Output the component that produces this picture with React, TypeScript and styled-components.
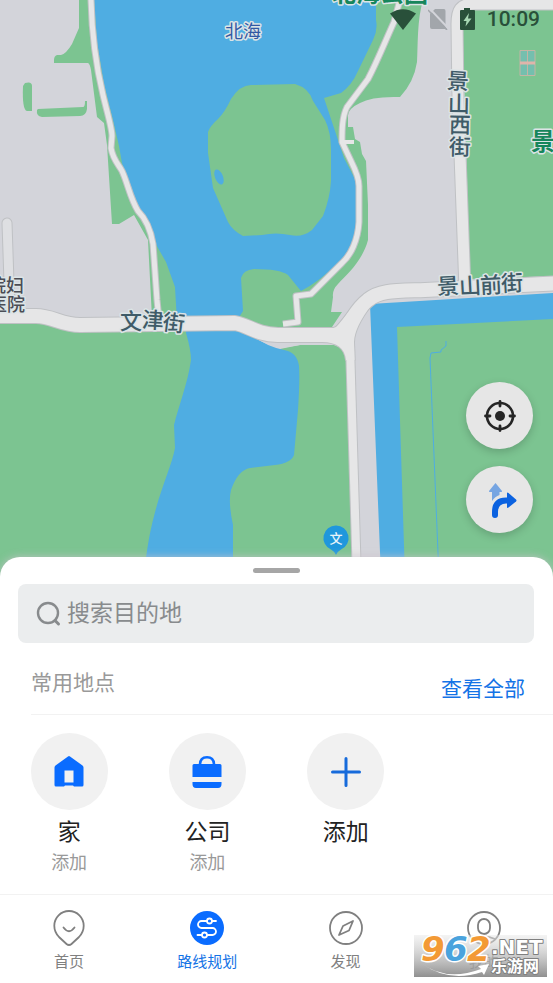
import React from "react";
import styled, { createGlobalStyle } from "styled-components";

const color = {
  land: "#d3d4da",
  green: "#7cc491",
  water: "#4fade2",
  road: "#e6e6e7",
  roadEdge: "#bfc1c4",
  blue: "#0a6cff",
  link: "#1473e6",
  muted: "#999999",
};

const GlobalStyle = createGlobalStyle`
  * { box-sizing: border-box; }
  body {
    margin: 0;
    background: #ffffff;
    font-family: Roboto, "Noto Sans CJK SC", sans-serif;
    color: #222222;
  }
  button, input { font: inherit; color: inherit; }
  button { border: 0; padding: 0; background: none; cursor: pointer; }
`;

const Page = styled.div`
  position: relative;
  display: flex;
  flex-direction: column;
  min-height: 100vh;
  overflow: hidden;
`;

const MapArea = styled.section`
  position: relative;
  flex: 1;
  min-height: 400px;
  display: flex;
  flex-direction: column;
  justify-content: space-between;
  background: ${color.land};
`;

const MapCanvas = styled.svg`
  position: absolute;
  inset: 0;
  width: 100%;
  height: 100%;
  font-family: "Noto Sans CJK SC", sans-serif;
`;

const StatusBar = styled.header`
  position: relative;
  display: flex;
  align-items: center;
  justify-content: flex-end;
  gap: 12px;
  height: 38px;
  padding-right: 13px;
  color: #29503a;
`;

const Clock = styled.time`
  font: 500 21px/24px Roboto, sans-serif;
`;

const MapControls = styled.div`
  position: relative;
  display: flex;
  flex-direction: column;
  align-items: flex-end;
  gap: 17px;
  padding: 0 20px 44px 0;
`;

const RoundButton = styled.button`
  display: grid;
  place-items: center;
  width: 67px;
  height: 67px;
  border-radius: 50%;
  background: #e6e6e6;
  box-shadow: 0 3px 8px rgba(0, 0, 0, 0.18);
`;

const Sheet = styled.main`
  position: relative;
  margin-top: -20px;
  border-radius: 20px 20px 0 0;
  background: #ffffff;
  box-shadow: 0 0 9px rgba(205, 195, 205, 0.8);
`;

const Handle = styled.div`
  width: 47px;
  height: 5px;
  margin: 0 auto 11px;
  border-radius: 3px;
  background: #a6a6a6;
`;

const SheetTop = styled.div`
  padding: 11px 19px 0 18px;
`;

const SearchBox = styled.label`
  display: flex;
  align-items: center;
  gap: 5px;
  height: 59px;
  padding: 0 18px;
  border-radius: 8px;
  background: #ebedee;
  color: #888b8d;
`;

const SearchInput = styled.input`
  flex: 1;
  min-width: 0;
  padding: 0;
  border: 0;
  outline: 0;
  background: none;
  font-size: 23px;
  line-height: 34px;
  &::placeholder { color: #888b8d; opacity: 1; }
`;

const SectionHeader = styled.div`
  display: flex;
  align-items: flex-end;
  justify-content: space-between;
  height: 72px;
  margin-left: 31px;
  padding-right: 28px;
  border-bottom: 1px solid #f2f2f2;
`;

const SectionTitle = styled.h2`
  margin: 0 0 16px;
  font-size: 21px;
  line-height: 30px;
  font-weight: 400;
  color: ${color.muted};
`;

const ViewAll = styled.a`
  margin-bottom: 10px;
  font-size: 21px;
  line-height: 30px;
  color: ${color.link};
  text-decoration: none;
`;

const Places = styled.div`
  display: grid;
  grid-template-columns: repeat(4, 1fr);
  padding: 18px 0 19px;
`;

const Place = styled.button`
  display: flex;
  flex-direction: column;
  align-items: center;
`;

const PlaceIcon = styled.span`
  display: grid;
  place-items: center;
  width: 77px;
  height: 77px;
  margin-bottom: 8px;
  border-radius: 50%;
  background: #f1f1f1;
`;

const PlaceName = styled.span`
  font-size: 23px;
  line-height: 30px;
`;

const PlaceHint = styled.span`
  margin-top: 3px;
  font-size: 18px;
  line-height: 24px;
  color: ${color.muted};
`;

const TabBar = styled.nav`
  display: grid;
  grid-template-columns: repeat(4, 1fr);
  padding: 15px 0 11px;
  border-top: 1px solid #f2f2f2;
`;

const Tab = styled.button<{ $active?: boolean }>`
  display: flex;
  flex-direction: column;
  align-items: center;
  gap: 6px;
  font-size: 15px;
  line-height: 20px;
  color: ${(p) => (p.$active ? color.link : "#808080")};
`;

const Watermark = styled.svg`
  position: absolute;
  right: 6px;
  bottom: 6px;
  width: 133px;
  height: 42px;
  overflow: visible;
  pointer-events: none;
`;

const MapLabel = styled.text<{ $tone?: string; $size?: number; $weight?: number }>`
  fill: ${(p) => p.$tone ?? "#3f5b68"};
  font-size: ${(p) => p.$size ?? 22}px;
  font-weight: ${(p) => p.$weight ?? 500};
  stroke: #dce4e6;
  stroke-width: 3px;
  stroke-linejoin: round;
  paint-order: stroke;
  text-anchor: middle;
`;

const roads = {
  lake: "M91 0C92 40 97 70 103 95C107 112 112 128 112 136L111 148C113 160 119 165 122 171C128 184 130 198 138 211C147 220 151 232 153 244L157 300L159 320",
  park: "M401 -4L394 22C384 44 377 62 368 79L347 107C342 117 342 130 342 142L351 161C356 171 359 178 359 186V222C358 240 351 255 342 263L311 294L296 296L298 322L283 324",
  parkStub: "M342 142H354",
  alley: "M7 223L10 312",
  main: "M-8 316H36C52 316 62 325 80 325L235 323C250 326 255 334 278 335L335 335C350 330 352 312 368 300C380 290 396 291 425 290L561 283",
  south: "M350 345L357 580",
  junction: "M322 342Q344 342 346 360H354.500L354 342Q354 328 372 304L352 308L334 330Z",
  west: "M561 4H474C460 4 457 10 457 24L458 100L465 290",
};

const streetChars = [
  ["景", 458, 89, 3], ["山", 459, 112, 1], ["西", 460, 133, 1], ["街", 460, 155, 1],
  ["文", 131, 329, 0], ["津", 153, 328, 3], ["街", 174, 331, 7],
  ["景", 448, 294, -3], ["山", 470, 294, -3], ["前", 491, 293, -3], ["街", 512, 291, -3],
] as const;

function MapDrawing() {
  return (
    <MapCanvas viewBox="0 0 553 577" preserveAspectRatio="xMidYMax slice" role="img" aria-label="地图">
      <g fill={color.green}>
        <path d="M79 0V28L72 44Q66 54 61 55H57Q54 56 54 60V63H88Q90 64 91 70L97 117L104 123L107 145L112 224H119L134 215L148 240L152 318H200V0Z" />
        <path d="M370 0H423C417 20 418 45 417 62Q414 82 400 97Q372 96 360 103Q347 109 348 117V127H353L355 139L360 142L362 154L366 161L368 205V240C362 262 347 274 338 284Q332 290 333 297L331 312H342L330 330H236V180H300V90Z" />
        <path d="M25 83Q32 81 32 86V111H27Q22 110 23 86Z" />
        <path d="M38 109L83 107Q85 107 85 101H87V109Q86 116 80 116L42 117Q36 116 37 110Z" />
        <path d="M0 322H60L90 331H200V577H0Z" />
        <path d="M225 577V440H275V350L300 345H334Q345 348 346 360L354 577Z" />
        <path d="M462 9H553V276L470 279Z" />
        <path d="M395 325L553 317V577H403Z" />
      </g>
      <g fill={color.water}>
        <path d="M94 0L97 42L104 84L113 120L119 146L122 163L133 199L145 223L158 248L166 262L175 287L177 322H236L243 311L241 278Q243 270 254 269Q280 269 288 275Q296 285 301 291Q320 281 338 263Q356 246 357 228V183L344 158L324 98L341 93Q352 85 358 71L373 40Q378 30 376 20V0Z" />
        <path d="M186 325V333Q191 350 191 360C188 382 179 405 174 425L175 448C170 475 150 505 144 577H233V525Q228 502 231 490Q238 470 250 468L275 465Q291 463 294 455L298 410Q300 380 299 366Q297 352 284 350Q258 345 244 325Z" />
        <path d="M370 304L553 293V319L397 327L405 577H381Z" />
      </g>
      <path fill={color.green} d="M251 85L295 84Q309 88 313 101L325 120Q331 132 331 150V181Q330 198 323 216L312 230Q302 238 290 235Q276 232 262 235L243 236Q232 230 228 222L213 188L208 153V132Q210 126 218 119Q225 112 231 99Q240 85 251 85Z" />
      <ellipse cx="219" cy="177" rx="4" ry="8" fill={color.water} transform="rotate(-22 219 177)" />
      <path fill="#d3d4da" d="M246 332Q262 344 281 348L300 345H335V335H250Z" />
      <path fill="none" stroke={color.water} strokeWidth="1" d="M446 341V346L441 350V352L431 353L430 358L439 577" />

      <g fill="none" strokeLinejoin="round">
        <g stroke={color.roadEdge}>
          <path d={roads.lake} strokeWidth="7" />
          <path d={roads.park} strokeWidth="7" />
          <path d={roads.alley} strokeWidth="11" strokeLinecap="round" />
          <path d={roads.west} strokeWidth="13" />
          <path d={roads.south} strokeWidth="10" />
          <path d={roads.main} strokeWidth="16" />
          <path d={roads.junction} strokeWidth="2" />
        </g>
        <g stroke={color.road}>
          <path d={roads.lake} strokeWidth="5" />
          <path d={roads.park} strokeWidth="5" />
          <path d={roads.parkStub} strokeWidth="4" />
          <path d={roads.alley} stroke="#dedfe2" strokeWidth="9" strokeLinecap="round" />
          <path d={roads.west} strokeWidth="11" />
          <path d={roads.south} strokeWidth="8" />
          <path d={roads.main} strokeWidth="14" />
        </g>
        <path d={roads.junction} fill={color.road} />
      </g>

      <g fill="#74bfae" stroke="#c3b5a4" strokeWidth="1">
        <path d="M520 50.500H535V75.500H520ZM527.500 50V76" />
        <path d="M520 63H535" stroke="#e0b4aa" strokeWidth="3" />
      </g>

      <MapLabel x="243" y="38" $size={18} $weight={400} $tone="#3259a4">北海</MapLabel>
      <MapLabel x="380" y="2" $size={24} $weight={700} $tone="#16865c">北海公园</MapLabel>
      <MapLabel x="543" y="150" $size={24} $weight={700} $tone="#16865c">景</MapLabel>
      <MapLabel x="6" y="292" $size={18} $tone="#4b4d55">院妇</MapLabel>
      <MapLabel x="7" y="311" $size={18} $tone="#4b4d55">医院</MapLabel>
      {streetChars.map(([char, x, y, turn]) => (
        <MapLabel key={`${x}-${y}`} x={x} y={y} transform={`rotate(${turn} ${x} ${y - 8})`}>
          {char}
        </MapLabel>
      ))}

      <path fill="#1f97dc" d="M336 525.500A12.500 12.500 0 0 1 341 549.500Q338 551 336 555Q334 551 331 549.500A12.500 12.500 0 0 1 336 525.500Z" />
      <text x="336" y="543" fontSize="13" fontWeight="500" fill="#e9f4fa" textAnchor="middle">文</text>
    </MapCanvas>
  );
}

const WifiIcon = () => (
  <svg width="26" height="21" viewBox="0 0 26 21" aria-hidden="true">
    <path fill="currentColor" d="M13 21L0 4.500Q13 -4 26 4.500Z" />
  </svg>
);

const NoSimIcon = () => (
  <svg width="20" height="21" viewBox="0 0 20 21" aria-hidden="true">
    <path fill="#a2a6ab" d="M2 5L7 0H16Q17.500 0 17.500 2V18L19 20H4Q2 20 2 18Z" />
    <path stroke="#d3d4da" strokeWidth="2" d="M2 0L20 19" />
    <path stroke="#a2a6ab" strokeWidth="1.500" d="M0 1L19 21" />
  </svg>
);

const BatteryIcon = () => (
  <svg width="15" height="22" viewBox="0 0 15 22" aria-hidden="true">
    <path fill="currentColor" d="M4 0H10V2H14Q15 2 15 3V21Q15 22 14 22H1Q0 22 0 21V3Q0 2 1 2H4Z" />
    <path fill="#a8d8b4" d="M9 5L3.500 13H6.500L5.500 18.500L11.500 10.500H8Z" />
  </svg>
);

const LocateIcon = () => (
  <svg width="34" height="34" viewBox="0 0 34 34" fill="none" stroke="#252525" aria-hidden="true">
    <circle cx="17" cy="17" r="13" strokeWidth="2.600" />
    <circle cx="17" cy="17" r="5" fill="#252525" stroke="none" />
    <path strokeWidth="2.800" strokeLinecap="round" d="M17 2.500V7M17 27V31.500M2.500 17H7M27 17H31.500" />
  </svg>
);

const RouteIcon = () => (
  <svg width="36" height="36" viewBox="0 0 36 36" aria-hidden="true">
    <path fill="#76a5e2" d="M13.500 1L20 9Q20.500 10 19 10H17.500V13Q13 14.500 10 19V10H8Q6.500 10 7 9Z" />
    <path fill="none" stroke="#0b62e0" strokeWidth="6" strokeLinecap="round" d="M13 33V30Q13 18.500 24 18.500H27" />
    <path fill="#0b62e0" d="M25 11.500Q25 10 26.500 11L34 17.500Q35 18.500 34 19.500L26.500 25.500Q25 26.500 25 25Z" />
  </svg>
);

const SearchIcon = () => (
  <svg width="26" height="26" viewBox="0 0 26 26" fill="none" stroke="currentColor" strokeWidth="2.400" strokeLinecap="round" aria-hidden="true">
    <circle cx="12" cy="12" r="10" />
    <path d="M19 19.500L22.500 23" strokeWidth="3" />
  </svg>
);

const HomeIcon = () => (
  <svg width="30" height="32" viewBox="0 0 30 32" aria-hidden="true">
    <path fill={color.blue} fillRule="evenodd" d="M14 0.500Q15 -0.300 16 0.500L28.500 9.500Q29.500 10.500 29.500 11.500V29Q29.500 30.500 28 30.500H20L19 29.500H11L10 30.500H2Q0.500 30.500 0.500 29V11.500Q0.500 10.500 1.500 9.500ZM10.500 14.500V26.500H19.500V14.500Z" />
  </svg>
);

const WorkIcon = () => (
  <svg width="30" height="32" viewBox="0 0 30 32" aria-hidden="true">
    <path fill="none" stroke={color.blue} strokeWidth="2.600" d="M8 9Q8 1.300 15 1.300T22 9" />
    <path fill={color.blue} d="M2 8H28Q29.500 8 29.500 9.500V21H0.500V9.500Q0.500 8 2 8ZM0.500 26H29.500V28Q29.500 32 26 32H4Q0.500 32 0.500 28Z" />
  </svg>
);

const PlusIcon = () => (
  <svg width="30" height="30" viewBox="0 0 30 30" aria-hidden="true">
    <path stroke="#176bdb" strokeWidth="3" strokeLinecap="round" d="M15 1.500V28.500M1.500 15H28.500" />
  </svg>
);

const PinTabIcon = () => (
  <svg width="34" height="36" viewBox="0 0 34 36" fill="none" stroke="currentColor" strokeWidth="1.800" strokeLinecap="round" aria-hidden="true">
    <path d="M17 1A14.700 14.700 0 0 1 31.700 15.700Q31.700 22 27 27L19.500 34Q17 36 14.500 34L7 27Q2.300 22 2.300 15.700A14.700 14.700 0 0 1 17 1Z" />
    <path d="M11.500 17.500Q17 25 22.500 17.500" />
  </svg>
);

const RouteTabIcon = () => (
  <svg width="34" height="36" viewBox="0 0 34 36" fill="none" stroke="#ffffff" strokeWidth="1.800" strokeLinecap="round" aria-hidden="true">
    <circle cx="17" cy="18" r="17" fill={color.blue} stroke="none" />
    <path d="M17 11H11.500A3.500 3.500 0 0 0 11.500 18H22.500A3.500 3.500 0 0 1 22.500 25H17M22 11H26M7.500 25H12" />
    <circle cx="19.500" cy="11" r="2.500" />
    <circle cx="14.500" cy="25" r="2.500" />
  </svg>
);

const DiscoverTabIcon = () => (
  <svg width="34" height="36" viewBox="0 0 34 36" fill="none" stroke="currentColor" strokeWidth="1.800" strokeLinejoin="round" aria-hidden="true">
    <circle cx="17" cy="18" r="16" />
    <path d="M24 11L20 20.500L10 25L14 16Z" />
  </svg>
);

const MineTabIcon = () => (
  <svg width="34" height="36" viewBox="0 0 34 36" fill="none" stroke="currentColor" strokeWidth="1.800" aria-hidden="true">
    <circle cx="17" cy="18" r="16" />
    <rect x="11" y="9" width="12" height="15" rx="6" />
    <path d="M6 29Q17 24 28 29" />
  </svg>
);

const places = [
  { name: "家", hint: "添加", icon: <HomeIcon /> },
  { name: "公司", hint: "添加", icon: <WorkIcon /> },
  { name: "添加", hint: "", icon: <PlusIcon /> },
];

const tabs = [
  { name: "首页", icon: <PinTabIcon /> },
  { name: "路线规划", icon: <RouteTabIcon />, active: true },
  { name: "发现", icon: <DiscoverTabIcon /> },
  { name: "我的", icon: <MineTabIcon /> },
];

function SiteMark() {
  return (
    <Watermark viewBox="0 0 133 42" role="img" aria-label="962.NET 乐游网">
      <defs>
        <linearGradient id="markShade" x1="0" y1="0" x2="0" y2="1">
          <stop offset="0" stopColor="#e8e8e8" stopOpacity="0.5" />
          <stop offset="1" stopColor="#8a8a8a" stopOpacity="0.95" />
        </linearGradient>
      </defs>
      <rect width="133" height="42" fill="url(#markShade)" />
      <path fill="#ffffff" d="M7 28Q32 47 67 34L64 31L75 29L70 40L68 37Q34 48 7 28Z" />
      <g fontFamily="DejaVu Sans, sans-serif" fontWeight="700" fontStyle="italic" fontSize="34" stroke="#ffffff" strokeWidth="3" strokeLinejoin="round" paintOrder="stroke">
        <text x="7" y="26" fill="#f39a35">9</text>
        <text x="30" y="26" fill="#4aa3dd">6</text>
        <text x="53" y="26" fill="#f39a35">2</text>
      </g>
      <g fill="#ffffff" stroke="#808080" strokeWidth="2" strokeLinejoin="round" paintOrder="stroke" fontWeight="700">
        <text x="77" y="19" fontFamily="DejaVu Sans, sans-serif" fontSize="20">.NET</text>
        <text x="77" y="37" fontFamily="Noto Sans CJK SC, sans-serif" fontSize="16">乐游网</text>
      </g>
    </Watermark>
  );
}

export default function App() {
  return (
    <Page>
      <GlobalStyle />
      <MapArea>
        <MapDrawing />
        <StatusBar>
          <WifiIcon />
          <NoSimIcon />
          <BatteryIcon />
          <Clock>10:09</Clock>
        </StatusBar>
        <MapControls>
          <RoundButton aria-label="定位"><LocateIcon /></RoundButton>
          <RoundButton aria-label="路线"><RouteIcon /></RoundButton>
        </MapControls>
      </MapArea>
      <Sheet>
        <SheetTop>
          <Handle />
          <SearchBox>
            <SearchIcon />
            <SearchInput type="text" placeholder="搜索目的地" aria-label="搜索目的地" />
          </SearchBox>
        </SheetTop>
        <SectionHeader>
          <SectionTitle>常用地点</SectionTitle>
          <ViewAll href="#all">查看全部</ViewAll>
        </SectionHeader>
        <Places>
          {places.map((place) => (
            <Place key={place.name}>
              <PlaceIcon>{place.icon}</PlaceIcon>
              <PlaceName>{place.name}</PlaceName>
              {place.hint && <PlaceHint>{place.hint}</PlaceHint>}
            </Place>
          ))}
        </Places>
        <TabBar>
          {tabs.map((tab) => (
            <Tab key={tab.name} $active={tab.active} aria-current={tab.active ? "page" : undefined}>
              {tab.icon}
              {tab.name}
            </Tab>
          ))}
        </TabBar>
      </Sheet>
      <SiteMark />
    </Page>
  );
}
